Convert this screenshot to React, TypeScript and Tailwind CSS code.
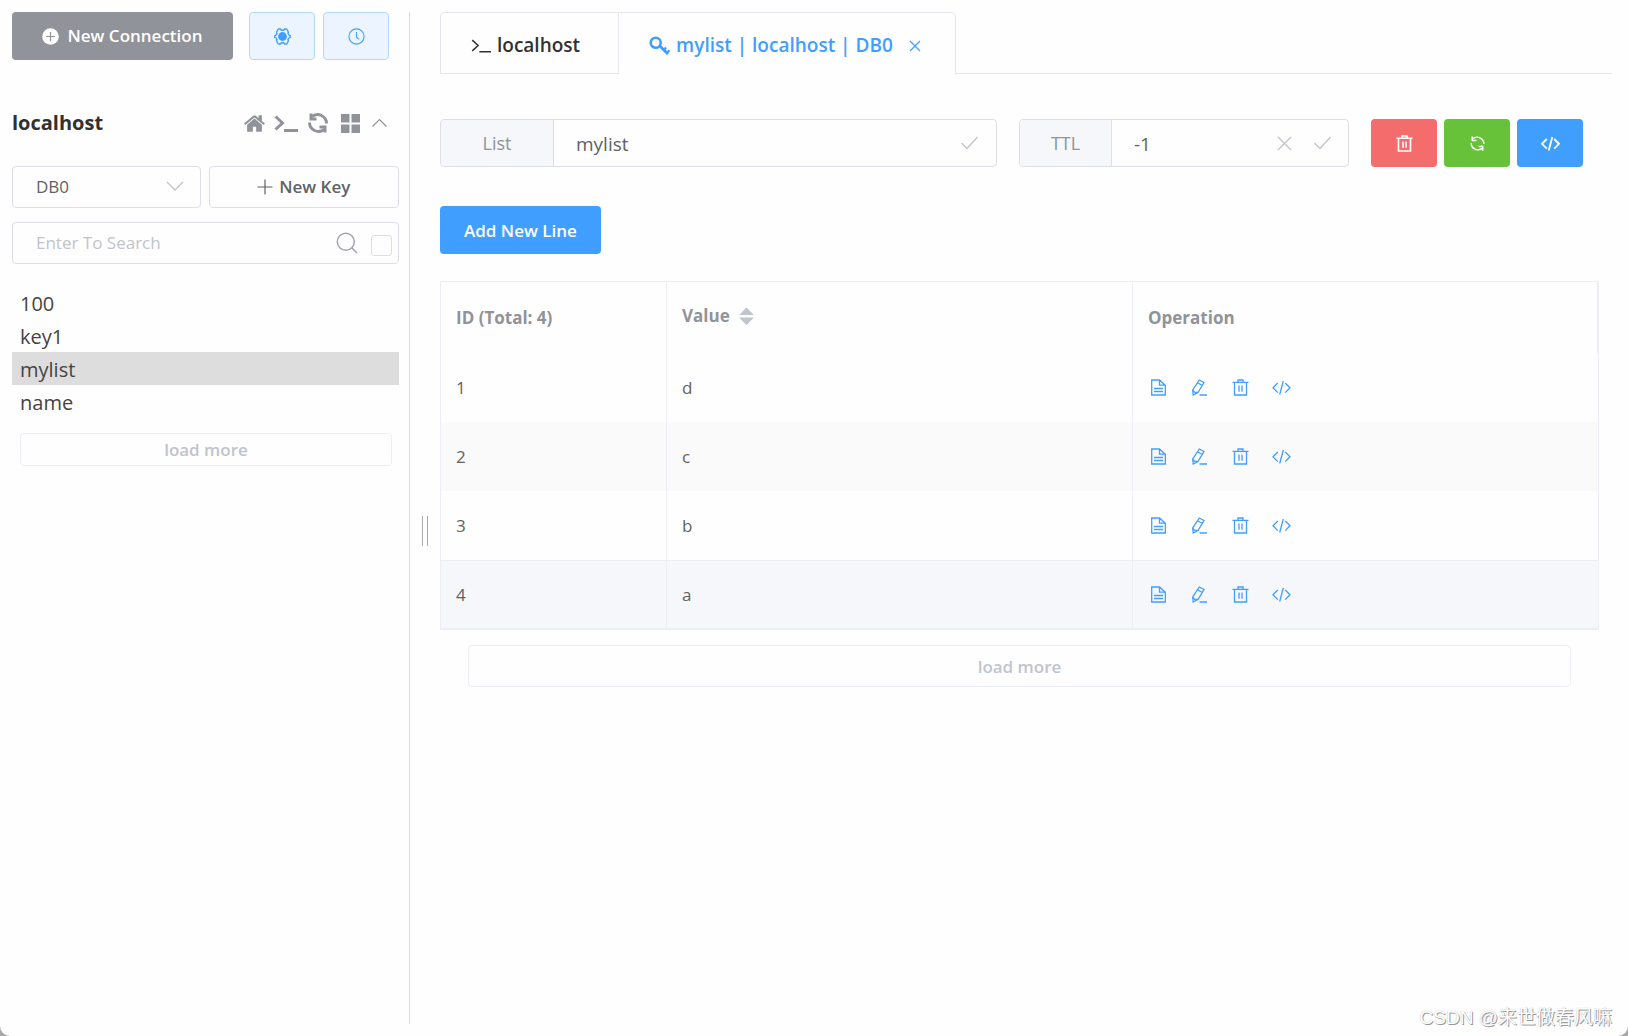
import type { ReactNode } from "react";

export default function App() {
  return (
    <div className="min-h-screen bg-[#a8a8a8] font-['Open_Sans','Noto_Sans_CJK_SC',sans-serif] text-[17px] text-[#606266]">
      <div className="relative flex min-h-screen rounded-b-[10px] bg-[#fefefe]">
        <Sidebar />

        {/* Drag handle */}
        <div className="flex w-[30px] items-center justify-center pt-[26px]">
          <div className="h-[30px] w-[6px] border-x border-[#aaaaaa]" />
        </div>

        <main className="min-w-0 flex-1 pt-3 pr-4">
          <Tabs />
          <div className="pr-[13px]">
            <KeyHeader />
            <button className="mt-[39px] h-12 rounded-[4px] bg-[#409eff] px-6 pt-[2px] font-semibold text-white">
              Add New Line
            </button>
            <ValueTable />
            <div className="mt-[15px] px-7">
              <button className="h-[42px] w-full rounded-[4px] border border-[#ebeef5] pt-[2px] font-semibold text-[#c0c4cc]">
                load more
              </button>
            </div>
          </div>
        </main>

        <div className="pointer-events-none absolute right-4 bottom-1 text-[19px] text-white [text-shadow:1px_1px_0_#999,0_0_1px_#aaa] font-['Liberation_Sans','Noto_Sans_CJK_SC',sans-serif]">
          CSDN @来世做春风嘛
        </div>
      </div>
    </div>
  );
}

function Sidebar() {
  return (
    <aside className="my-3 w-[410px] shrink-0 border-r border-[#dcdcdc] pr-[10px] pl-3">
      <div className="flex h-12 pr-[10px]">
        <button className="mr-4 flex flex-1 items-center justify-center gap-2 rounded-[4px] bg-[#909399] font-semibold text-white">
          <PlusCircle />
          New Connection
        </button>
        <button aria-label="Settings" className="mr-2 flex w-[66px] items-center justify-center rounded-[4px] border border-[#b3d8ff] bg-[#ecf5ff] text-[#409eff]">
          <Gear />
        </button>
        <button aria-label="Command log" className="flex w-[66px] items-center justify-center rounded-[4px] border border-[#b3d8ff] bg-[#ecf5ff] text-[#409eff]">
          <Clock />
        </button>
      </div>

      {/* Connection name and its actions */}
      <div className="mt-[47px] flex h-8 items-center justify-between">
        <h2 className="text-[20px] font-bold text-[#303133]">localhost</h2>
        <div className="flex items-center text-[#909399]">
          <button aria-label="Home" className="w-[31px]"><Home /></button>
          <button aria-label="Console" className="w-[34px]"><Terminal className="h-5 w-6" weight={3} /></button>
          <button aria-label="Refresh" className="w-[33px]"><Refresh className="h-5 w-5" weight={3} /></button>
          <button aria-label="Operations" className="w-[31px]"><Grid /></button>
          <button aria-label="Collapse" className="w-[27px]"><ChevronUp /></button>
        </div>
      </div>

      <div className="mt-[27px] flex gap-2">
        <div className="relative flex-1">
          <select aria-label="Database" className="h-[42px] w-full appearance-none rounded-[4px] border border-[#dcdfe6] bg-transparent px-[23px]">
            <option>DB0</option>
          </select>
          <svg className="pointer-events-none absolute top-[14px] right-[17px] h-[12px] w-[18px] text-[#c0c4cc]" viewBox="0 0 18 12" fill="none" stroke="currentColor" strokeWidth="1.3">
            <path d="M1 2l8 8 8-8" />
          </svg>
        </div>
        <button className="flex h-[42px] flex-1 items-center justify-center gap-[6px] rounded-[4px] border border-[#dcdfe6] font-semibold">
          <svg className="h-4 w-4" viewBox="0 0 16 16" fill="none" stroke="currentColor" strokeWidth="1.2">
            <path d="M8 0.5v15M0.5 8h15" />
          </svg>
          New Key
        </button>
      </div>

      <div className="mt-[14px] flex h-[42px] items-center rounded-[4px] border border-[#dcdfe6] pr-[6px] pl-[23px]">
        <input aria-label="Search keys" placeholder="Enter To Search" className="min-w-0 flex-1 bg-transparent outline-none placeholder:text-[#c0c4cc]" />
        <svg className="mr-[13px] h-[22px] w-[22px] text-[#a0a4ac]" viewBox="0 0 22 22" fill="none" stroke="currentColor" strokeWidth="1.5">
          <circle cx="9.800" cy="9.800" r="8.500" />
          <path d="M15.500 15.500l5.500 5.500" />
        </svg>
        <input type="checkbox" aria-label="Exact search" className="mt-1 h-[21px] w-[21px] appearance-none rounded-[3px] border border-[#dcdfe6]" />
      </div>

      <ul className="mt-[22px] text-[20px] text-[#444444]">
        {keys.map((key) => (
          <li key={key} className={key === "mylist" ? "bg-[#dddddd]" : ""}>
            <a href="#" className="block h-[33px] px-2 pt-[2px] leading-[31px]">{key}</a>
          </li>
        ))}
      </ul>

      <div className="mt-[15px] pr-[7px] pl-2">
        <button className="h-[33px] w-full rounded-[4px] border border-[#ebeef5] font-semibold text-[#c0c4cc]">
          load more
        </button>
      </div>
    </aside>
  );
}

function Tabs() {
  return (
    <div className="flex h-[62px] text-[19px] font-semibold">
      <button className="flex items-center gap-[6px] rounded-tl-[5px] border-t border-b border-l border-[#e4e7ed] pt-1 pr-[38px] pl-[30px] text-[#303133]">
        <Terminal className="h-[17px] w-5" weight={1.8} />
        localhost
      </button>
      <div className="flex items-center rounded-tr-[5px] border-x border-t border-[#e4e7ed] px-[30px] pt-1 text-[#409eff]">
        <button className="flex items-center gap-[6px]">
          <Key />
          mylist | localhost | DB0
        </button>
        <button aria-label="Close tab" className="mr-1 ml-4">
          <svg className="h-[12px] w-[12px]" viewBox="0 0 12 12" fill="none" stroke="currentColor" strokeWidth="1.2">
            <path d="M1 1l10 10M11 1L1 11" />
          </svg>
        </button>
      </div>
      <div className="flex-1 border-b border-[#e4e7ed]" />
    </div>
  );
}

function KeyHeader() {
  return (
    <div className="mt-[45px] flex items-center gap-[22px] pr-4">
      <div className="flex h-12 min-w-0 flex-1 items-center rounded-[4px] border border-[#dcdfe6]">
        <label htmlFor="key-name" className="flex h-full w-[113px] items-center justify-center rounded-l-[4px] border-r border-[#dcdfe6] bg-[#f5f7fa] text-[18px] text-[#909399]">
          List
        </label>
        <input id="key-name" defaultValue="mylist" className="h-full min-w-0 flex-1 bg-transparent px-[22px] pt-[2px] text-[19px] outline-none" />
        <button aria-label="Rename" className="mr-[18px]"><Check /></button>
      </div>
      <div className="flex h-12 w-[330px] items-center rounded-[4px] border border-[#dcdfe6]">
        <label htmlFor="key-ttl" className="flex h-full w-[92px] items-center justify-center rounded-l-[4px] border-r border-[#dcdfe6] bg-[#f5f7fa] text-[18px] text-[#909399]">
          TTL
        </label>
        <input id="key-ttl" defaultValue="-1" className="h-full min-w-0 flex-1 bg-transparent px-[22px] pt-[2px] text-[19px] outline-none" />
        <button aria-label="Persist" className="mr-[22px] text-[#c0c4cc]">
          <svg className="h-[15px] w-[15px]" viewBox="0 0 15 15" fill="none" stroke="currentColor" strokeWidth="1.4">
            <path d="M1 1l13 13M14 1L1 14" />
          </svg>
        </button>
        <button aria-label="Save TTL" className="mr-[17px]"><Check /></button>
      </div>
      <div className="flex gap-[7px] text-white">
        <button aria-label="Delete key" className="flex h-12 w-[66px] items-center justify-center rounded-[4px] bg-[#f56c6c]">
          <Trash weight={1.6} />
        </button>
        <button aria-label="Refresh key" className="flex h-12 w-[66px] items-center justify-center rounded-[4px] bg-[#67c23a]">
          <Refresh className="h-[15px] w-[15px]" weight={1.9} />
        </button>
        <button aria-label="Dump command" className="flex h-12 w-[66px] items-center justify-center rounded-[4px] bg-[#409eff]">
          <Code weight={1.8} />
        </button>
      </div>
    </div>
  );
}

function ValueTable() {
  return (
    <table className="mt-[27px] w-full table-fixed border-separate border-spacing-0 border-t border-l border-[#ebeef5] text-left">
      <colgroup>
        <col className="w-[226px]" />
        <col />
        <col />
      </colgroup>
      <thead className="text-[#909399]">
        <tr className="h-[71px]">
          <th className="border-r border-[#ebeef5] px-[15px] font-bold">ID (Total: 4)</th>
          <th className="border-r border-[#ebeef5] px-[15px] pb-1 font-bold">
            <button className="flex items-center gap-[9px] font-bold">
              Value
              <svg className="h-[18px] w-[15px] text-[#c0c4cc]" viewBox="0 0 15 18" fill="currentColor">
                <path d="M7.500 0.500L15 8H0zM0 10.500h15L7.500 18z" />
              </svg>
            </button>
          </th>
          <th className="border-r-2 border-[#ebeef5] px-[15px] font-bold">Operation</th>
        </tr>
      </thead>
      <tbody>
        {rows.map((row) => (
          <tr key={row.id} className={row.style}>
            <td className="border-r border-[#ebeef5] px-[15px]">{row.id}</td>
            <td className="border-r border-[#ebeef5] px-[15px]">{row.value}</td>
            <td className="border-r border-[#ebeef5] pl-[5px]">
              <div className="flex text-[#409eff]">
                <Action label="View"><Doc /></Action>
                <Action label="Edit"><Edit /></Action>
                <Action label="Delete"><Trash weight={1.3} /></Action>
                <Action label="Dump"><Code weight={1.3} /></Action>
              </div>
            </td>
          </tr>
        ))}
      </tbody>
    </table>
  );
}

function Action({ label, children }: { label: string; children: ReactNode }) {
  return (
    <button aria-label={label} className="flex w-[41px] justify-center">
      {children}
    </button>
  );
}

function PlusCircle() {
  return (
    <svg className="h-[17px] w-[17px]" viewBox="0 0 17 17">
      <circle cx="8.5" cy="8.5" r="8.3" fill="currentColor" />
      <path d="M8.500 4v9M4 8.500h9" stroke="#909399" strokeWidth="1.2" />
    </svg>
  );
}

function Gear() {
  return (
    <svg className="h-[17px] w-[17px]" viewBox="0 0 17 17">
      <path
        d="M4.300 1h2.100l1 1.200h2.200l1-1.200h2.100l1.700 3-.4 1.400.9 1.600 1.300.7v1.600l-1.300.7-.9 1.600.4 1.400-1.700 3h-2.100l-1-1.200H7.400l-1 1.200H4.300l-1.700-3 .4-1.400-.9-1.600L.8 9.300V7.700L2.100 7l.9-1.600L2.600 4z"
        fill="none"
        stroke="currentColor"
        strokeWidth="1.4"
        strokeLinejoin="round"
      />
      <circle cx="8.5" cy="8.5" r="4.400" fill="currentColor" />
    </svg>
  );
}

function Clock() {
  return (
    <svg className="h-[17px] w-[17px]" viewBox="0 0 17 17" fill="none" stroke="currentColor" strokeWidth="1.1">
      <circle cx="8.5" cy="8.5" r="7.6" />
      <path d="M8.500 4v5.200l2.600 2.200" />
    </svg>
  );
}

function Home() {
  return (
    <svg className="h-[23px] w-[23px]" viewBox="0 0 1792 1792" fill="currentColor">
      <path d="M1472 992v480q0 26-19 45t-45 19h-384v-384h-256v384h-384q-26 0-45-19t-19-45v-480q0-1 .5-3t.5-3l575-474 575 474q1 2 1 6zm223-69l-62 74q-8 9-21 11h-3q-13 0-21-7l-692-577-692 577q-12 8-24 7-13-2-21-11l-62-74q-8-10-7-23.500t11-21.500l719-599q32-26 76-26t76 26l244 204v-195q0-14 9-23t23-9h192q14 0 23 9t9 23v408l219 182q10 8 11 21.500t-7 23.500z" />
    </svg>
  );
}

function Terminal({ className, weight }: { className: string; weight: number }) {
  return (
    <svg className={className} viewBox="0 0 24 20" fill="none" stroke="currentColor" strokeWidth={weight}>
      <path d="M1.500 3.500l7 6.500-7 6.500M10 17.500h14" />
    </svg>
  );
}

function Refresh({ className, weight }: { className: string; weight: number }) {
  return (
    <svg className={className} viewBox="0 0 20 20" fill="none" stroke="currentColor" strokeWidth={weight}>
      <path d="M4 3.500A9 9 0 0 1 18.500 10.500M16 16.500A9 9 0 0 1 1.500 9.500" />
      <path d="M3 0.500v5.500h5.500M17 19.500V14h-5.500" />
    </svg>
  );
}

function Grid() {
  return (
    <svg className="h-[19px] w-[19px]" viewBox="0 0 19 19" fill="currentColor">
      <path d="M0 0h8.500v8.500H0zM10.500 0H19v8.500h-8.500zM0 10.500h8.500V19H0zM10.500 10.500H19V19h-8.500z" />
    </svg>
  );
}

function ChevronUp() {
  return (
    <svg className="h-[10px] w-[15px]" viewBox="0 0 15 10" fill="none" stroke="currentColor" strokeWidth="1.2">
      <path d="M0.500 8.500l7-7 7 7" />
    </svg>
  );
}

function Key() {
  return (
    <svg className="h-[20px] w-[21px]" viewBox="0 0 21 20" fill="none" stroke="currentColor">
      <circle cx="6.700" cy="6.700" r="5" strokeWidth="2.600" />
      <path d="M10.300 9.500l8.700 8.500" strokeWidth="2.800" />
      <path d="M14.500 14.500l2.500-3M17.500 17.500l3-3.200" strokeWidth="2.200" />
    </svg>
  );
}

function Check() {
  return (
    <svg className="h-[14px] w-[17px] text-[#c0c4cc]" viewBox="0 0 17 14" fill="none" stroke="currentColor" strokeWidth="1.400">
      <path d="M0.500 7l5.500 5.500L16.500 1" />
    </svg>
  );
}

function Doc() {
  return (
    <svg className="h-[17px] w-[17px]" viewBox="0 0 17 17" fill="none" stroke="currentColor" strokeWidth="1.300">
      <path d="M1.700 1h7.800l5.800 5.200V16H1.700zM9.500 1v5.200h5.800M4 9.500h9M4 12.500h9" />
    </svg>
  );
}

function Edit() {
  return (
    <svg className="h-[17px] w-[17px]" viewBox="0 0 17 17" fill="none" stroke="currentColor" strokeWidth="1.300">
      <path d="M8.300 1l4.700 2.500-6 10L2.200 16 1.700 11zM6.800 4l4.600 2.500M1.700 11l1.800 2.200 3.500.3M8.500 16H16" />
    </svg>
  );
}

function Trash({ weight }: { weight: number }) {
  return (
    <svg className="h-[17px] w-[17px]" viewBox="0 0 17 17" fill="none" stroke="currentColor" strokeWidth={weight}>
      <path d="M0.500 3.300h16M2.500 3.300V16h12V3.300M6 3.300V1h5v2.300M7 6.500v6.300M10 6.500v6.300" />
    </svg>
  );
}

function Code({ weight }: { weight: number }) {
  return (
    <svg className="h-[17px] w-[19px]" viewBox="0 0 19 17" fill="none" stroke="currentColor" strokeWidth={weight}>
      <path d="M5.800 4L1 8.800l4.800 4.800M13.200 4L18 8.800l-4.800 4.800M11.300 2L7.700 15.500" />
    </svg>
  );
}

const keys = ["100", "key1", "mylist", "name"];

const rows = [
  { id: 1, value: "d", style: "h-[69px]" },
  { id: 2, value: "c", style: "h-[69px] bg-[#fafafa]" },
  { id: 3, value: "b", style: "h-[69px]" },
  { id: 4, value: "a", style: "h-[70px] bg-[#f5f7fa] [&>td]:border-t [&>td]:border-b-2" },
];
